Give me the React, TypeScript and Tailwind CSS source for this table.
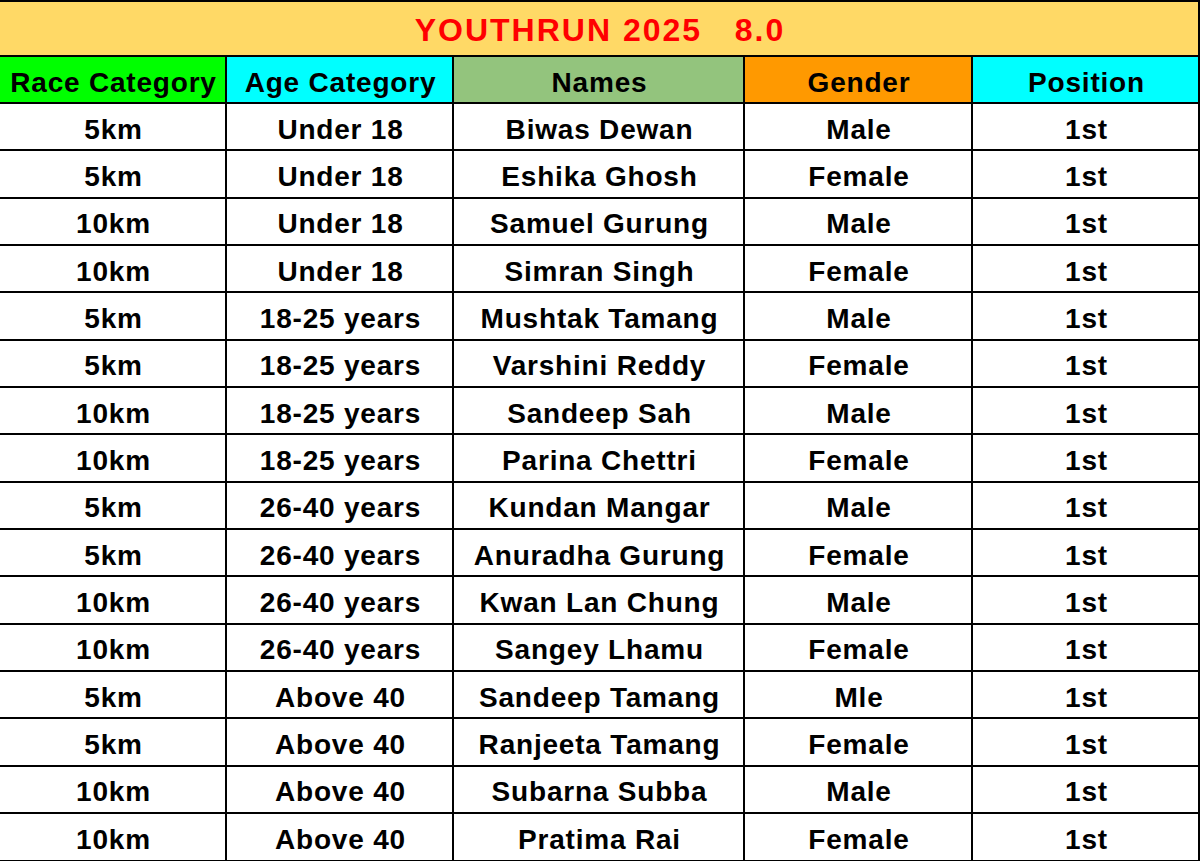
import React from "react";

const rows: [string, string, string, string, string][] = [
  ["5km", "Under 18", "Biwas Dewan", "Male", "1st"],
  ["5km", "Under 18", "Eshika Ghosh", "Female", "1st"],
  ["10km", "Under 18", "Samuel Gurung", "Male", "1st"],
  ["10km", "Under 18", "Simran Singh", "Female", "1st"],
  ["5km", "18-25 years", "Mushtak Tamang", "Male", "1st"],
  ["5km", "18-25 years", "Varshini Reddy", "Female", "1st"],
  ["10km", "18-25 years", "Sandeep Sah", "Male", "1st"],
  ["10km", "18-25 years", "Parina Chettri", "Female", "1st"],
  ["5km", "26-40 years", "Kundan Mangar", "Male", "1st"],
  ["5km", "26-40 years", "Anuradha Gurung", "Female", "1st"],
  ["10km", "26-40 years", "Kwan Lan Chung", "Male", "1st"],
  ["10km", "26-40 years", "Sangey Lhamu", "Female", "1st"],
  ["5km", "Above 40", "Sandeep Tamang", "Mle", "1st"],
  ["5km", "Above 40", "Ranjeeta Tamang", "Female", "1st"],
  ["10km", "Above 40", "Subarna Subba", "Male", "1st"],
  ["10km", "Above 40", "Pratima Rai", "Female", "1st"],
];

const headers: { label: string; bg: string }[] = [
  { label: "Race Category", bg: "bg-[#00ff00]" },
  { label: "Age Category", bg: "bg-[#00ffff]" },
  { label: "Names", bg: "bg-[#93c47d]" },
  { label: "Gender", bg: "bg-[#ff9900]" },
  { label: "Position", bg: "bg-[#00ffff]" },
];

const gridCols = "grid grid-cols-[227px_227px_291px_228px_227px]";

export default function App() {
  return (
    <div
      className="w-[1200px] h-[861px] overflow-hidden bg-white text-black font-bold"
      style={{ fontFamily: '"Liberation Sans", Arial, sans-serif' }}
    >
      <div className="border-t-2 border-b-2 border-r-2 border-black h-[57px] bg-[#ffd966] flex items-center justify-center">
        <span className="text-[#ff0000] text-[32px] leading-none tracking-[2px] whitespace-pre pt-[3px] pl-[2px]">
          YOUTHRUN 2025   8.0
        </span>
      </div>
      <div className={`${gridCols} h-[47px]`}>
        {headers.map((h) => (
          <div
            key={h.label}
            className={`${h.bg} border-r-2 border-b-2 border-black flex items-center justify-center text-[28px] leading-none tracking-[0.8px] pt-[6px] pl-[2px]`}
          >
            {h.label}
          </div>
        ))}
      </div>
      {rows.map((r, i) => (
        <div key={i} className={`${gridCols} h-[47.35px]`}>
          {r.map((c, j) => (
            <div
              key={j}
              className="border-r-2 border-b-2 border-black flex items-center justify-center text-[28px] leading-none tracking-[0.8px] pt-[6px] pl-[2px]"
            >
              {c}
            </div>
          ))}
        </div>
      ))}
    </div>
  );
}
